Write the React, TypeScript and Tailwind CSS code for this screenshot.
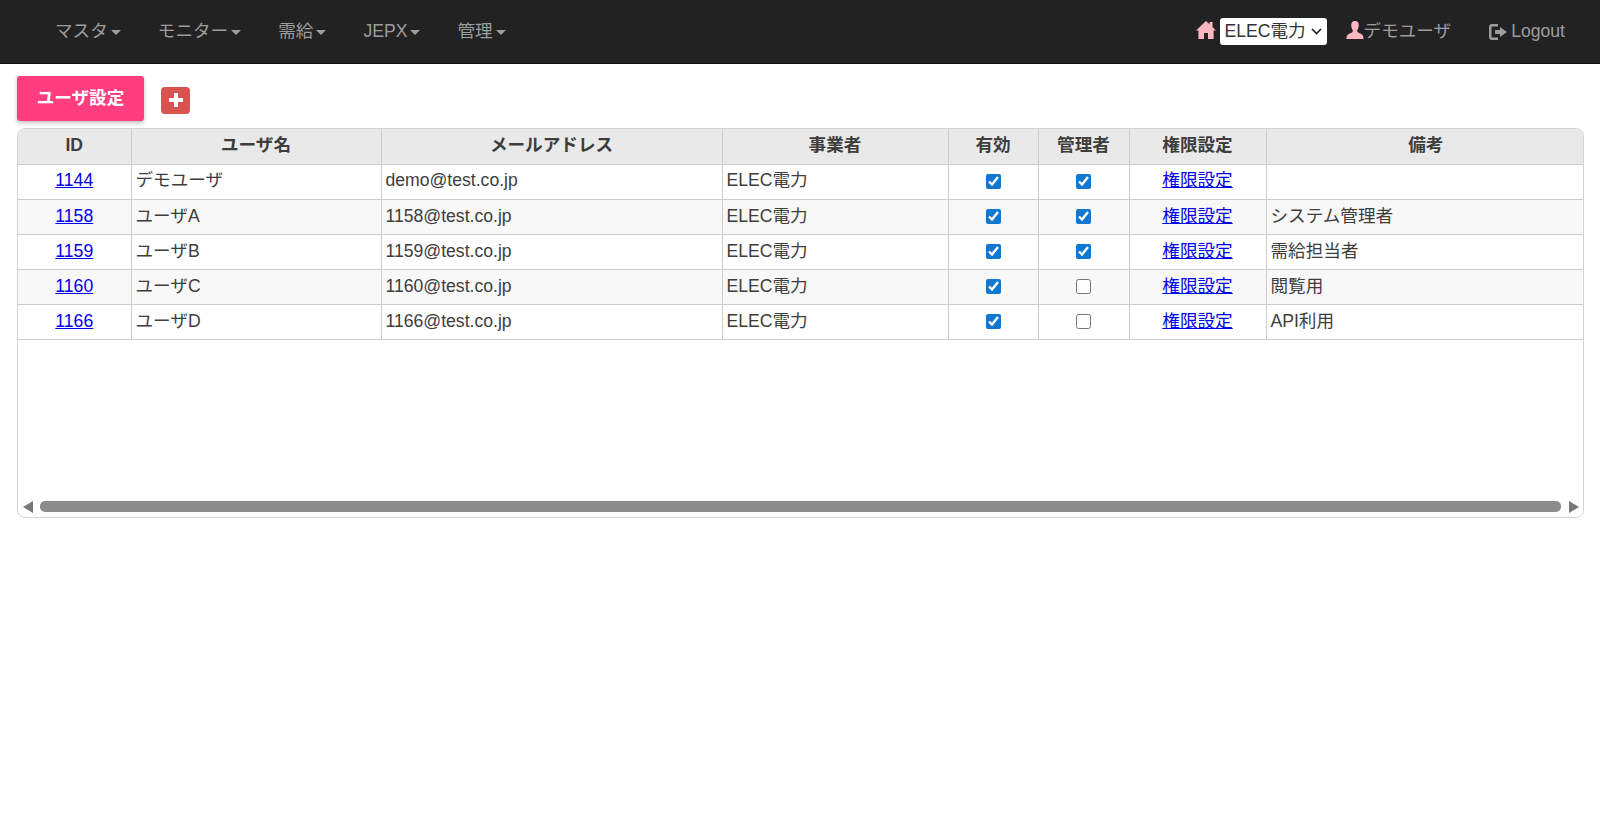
const navItems = [
  { label: "マスタ", gap: "mr-[37px]" },
  { label: "モニター", gap: "mr-[37px]" },
  { label: "需給", gap: "mr-[37px]" },
  { label: "JEPX", gap: "mr-[37px]" },
  { label: "管理", gap: "" },
];

const users = [
  { id: 1144, name: "デモユーザ", mail: "demo@test.co.jp", active: true, admin: true, note: "" },
  { id: 1158, name: "ユーザA", mail: "1158@test.co.jp", active: true, admin: true, note: "システム管理者" },
  { id: 1159, name: "ユーザB", mail: "1159@test.co.jp", active: true, admin: true, note: "需給担当者" },
  { id: 1160, name: "ユーザC", mail: "1160@test.co.jp", active: true, admin: false, note: "閲覧用" },
  { id: 1166, name: "ユーザD", mail: "1166@test.co.jp", active: true, admin: false, note: "API利用" },
];

const headers = ["ID", "ユーザ名", "メールアドレス", "事業者", "有効", "管理者", "権限設定", "備考"];
const colWidths = ["w-[113px]", "w-[250px]", "w-[341px]", "w-[226px]", "w-[90px]", "w-[91px]", "w-[137px]", "w-[319px]"];

function Caret() {
  return <span className="ml-[3px] inline-block h-0 w-0 border-x-[5px] border-t-[5px] border-x-transparent border-t-[#9d9d9d] align-middle" />;
}

function HomeIcon() {
  return (
    <svg viewBox="0 0 20 18" className="h-[18px] w-[20px] fill-[#ffb6c1]">
      <path d="M10 0 L13.5 3.2 V1 H16.5 V6 L20 9.5 L17.6 9.5 L17.6 18 L12 18 L12 12 L8 12 L8 18 L2.4 18 L2.4 9.5 L0 9.5 Z" />
    </svg>
  );
}

function UserIcon() {
  return (
    <svg viewBox="0 0 18 19" className="h-[18px] w-[18px] fill-[#ffb6c1]">
      <path d="M9 0 C12 0 13.2 2.2 13 5 C12.9 7.4 11.8 9 11.2 10 C11 11.4 12 12 14 13 C16.5 14.2 18 15 18 19 L0 19 C0 15 1.5 14.2 4 13 C6 12 7 11.4 6.8 10 C6.2 9 5.1 7.4 5 5 C4.8 2.2 6 0 9 0 Z" />
    </svg>
  );
}

function LogoutIcon() {
  return (
    <svg viewBox="0 0 18 16" className="h-[16px] w-[18px] fill-[#9d9d9d]">
      <path d="M3 0 H9 V2.5 H3.5 C2.9 2.5 2.5 2.9 2.5 3.5 V12.5 C2.5 13.1 2.9 13.5 3.5 13.5 H9 V16 H3 C1.3 16 0 14.7 0 13 V3 C0 1.3 1.3 0 3 0 Z" />
      <path d="M11 3 L18 8 L11 13 V10 H6 V6 H11 Z" />
    </svg>
  );
}

export default function App() {
  return (
    <div className="min-h-[830px] bg-white font-['Liberation_Sans','Noto_Sans_CJK_JP',sans-serif] text-[17.6px] text-[#3d3d3d]">
      <nav className="flex h-[64px] items-center justify-between border-b border-[#111] bg-[#222] pl-[55px] pr-[35px] text-[#9d9d9d]">
        <ul className="flex items-center">
          {navItems.map((item) => (
            <li key={item.label} className={item.gap}>
              {item.label}
              <Caret />
            </li>
          ))}
        </ul>
        <div className="flex items-center">
          <span className="mb-[4px]">
            <HomeIcon />
          </span>
          <div className="relative ml-[4px]">
            <select className="block h-[27px] w-[107px] appearance-none rounded-[3px] bg-white pl-[5px] text-[#333]" defaultValue="elec">
              <option value="elec">ELEC電力</option>
            </select>
            <svg viewBox="0 0 11 7" className="pointer-events-none absolute right-[5px] top-[10px] h-[7px] w-[11px] fill-none stroke-[#222] stroke-[1.7]">
              <path d="M1 1 L5.5 5.5 L10 1" />
            </svg>
          </div>
          <span className="mb-[3px] ml-[19px]">
            <UserIcon />
          </span>
          <span>デモユーザ</span>
          <span className="ml-[38px]">
            <LogoutIcon />
          </span>
          <span className="ml-[4px]">Logout</span>
        </div>
      </nav>

      <main className="px-[17px] pt-[12px]">
        <div className="flex items-center">
          <button className="h-[45px] w-[127px] rounded-[3px] bg-[#ff3d7f] text-[17.6px] font-bold text-white shadow-[0_2px_4px_rgba(0,0,0,0.25)]">
            ユーザ設定
          </button>
          <button className="ml-[17px] mt-[3px] flex h-[27px] w-[29px] items-center justify-center rounded-[4px] bg-[#d9534f]">
            <svg viewBox="0 0 14 14" className="h-[14px] w-[14px] fill-white">
              <path d="M5 0 H9 V5 H14 V9 H9 V14 H5 V9 H0 V5 H5 Z" />
            </svg>
          </button>
        </div>

        <div className="mt-[7px] flex h-[390px] w-[1567px] flex-col justify-between overflow-hidden rounded-[8px] border border-[#d4d4d4]">
          <table className="w-[1567px] table-fixed border-collapse">
            <colgroup>
              {colWidths.map((w, i) => (
                <col key={i} className={w} />
              ))}
            </colgroup>
            <thead>
              <tr className="h-[35px] bg-[#e9e9e9]">
                {headers.map((h, i) => (
                  <th key={h} className={`border-b border-[#ccc] pb-[3px] font-bold ${i > 0 ? "border-l" : ""}`}>
                    {h}
                  </th>
                ))}
              </tr>
            </thead>
            <tbody>
              {users.map((u, i) => (
                <tr key={u.id} className={`h-[35.2px] ${i % 2 === 0 ? "bg-white" : "bg-[#f8f8f8]"}`}>
                  <td className="border-b border-[#ccc] pb-[2px] text-center">
                    <a href="#" className="text-[#0000ee] underline">{u.id}</a>
                  </td>
                  <td className="border-b border-l border-[#ccc] px-[4px] pb-[2px]">{u.name}</td>
                  <td className="border-b border-l border-[#ccc] px-[4px] pb-[2px]">{u.mail}</td>
                  <td className="border-b border-l border-[#ccc] px-[4px] pb-[2px]">ELEC電力</td>
                  <td className="border-b border-l border-[#ccc] pb-[3px] text-center">
                    <input type="checkbox" readOnly checked={u.active} className="h-[15px] w-[15px] align-middle accent-[#0f78d0]" />
                  </td>
                  <td className="border-b border-l border-[#ccc] pb-[3px] text-center">
                    <input type="checkbox" readOnly checked={u.admin} className="h-[15px] w-[15px] align-middle accent-[#0f78d0]" />
                  </td>
                  <td className="border-b border-l border-[#ccc] pb-[2px] text-center">
                    <a href="#" className="text-[#0000ee] underline">権限設定</a>
                  </td>
                  <td className="border-b border-l border-[#ccc] px-[4px] pb-[2px]">{u.note}</td>
                </tr>
              ))}
            </tbody>
          </table>

          <div className="mb-[5px] flex h-[11px] items-center pl-[5px] pr-[4px]">
            <span className="h-0 w-0 border-y-[6px] border-r-[10px] border-y-transparent border-r-[#777]" />
            <div className="ml-[7px] mr-[8px] h-[11px] flex-1 rounded-[5px] bg-[#8c8c8c]" />
            <span className="h-0 w-0 border-y-[6px] border-l-[10px] border-y-transparent border-l-[#777]" />
          </div>
        </div>
      </main>
    </div>
  );
}
